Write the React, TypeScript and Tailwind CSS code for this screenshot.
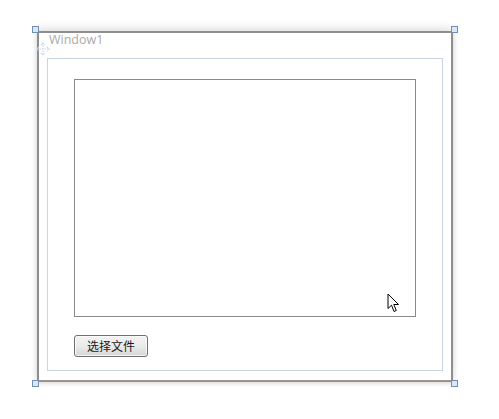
import React from 'react'

function Handle({ className }: { className: string }) {
  return (
    <div
      className={`absolute w-[7px] h-[7px] border border-[#6d8fb8] bg-[#dbe7f5] ${className}`}
    />
  )
}

function MoveIcon() {
  return (
    <svg
      width="14"
      height="14"
      viewBox="0 0 14 14"
      className="absolute left-[-3px] top-[9px]"
      aria-hidden
    >
      <g fill="none" stroke="#c6d6e9" strokeWidth="1.2" strokeDasharray="1.5 1">
        <path d="M7 1 L7 13 M1 7 L13 7" />
        <path d="M5 3 L7 1 L9 3 M5 11 L7 13 L9 11 M3 5 L1 7 L3 9 M11 5 L13 7 L11 9" />
      </g>
    </svg>
  )
}

function Cursor() {
  return (
    <svg
      width="13"
      height="20"
      viewBox="0 0 13 20"
      className="absolute left-[339px] top-[234px]"
      aria-hidden
    >
      <path
        d="M1 1 L1 15.5 L4.5 12.2 L7 18.5 L9.3 17.5 L6.8 11.5 L11.5 11.5 Z"
        fill="#ffffff"
        stroke="#000000"
        strokeWidth="1"
      />
    </svg>
  )
}

export default function App() {
  return (
    <div
      className="w-[499px] h-[419px] bg-white pt-[31px] pl-[37px]"
      style={{ fontFamily: '"Noto Sans CJK SC", "Liberation Sans", sans-serif' }}
    >
      <div className="relative w-[416px] h-[351px] border-2 border-[#8e8e8e] border-b-[#9a948c] shadow-[0_-3px_8px_rgba(0,0,0,0.12),0_2px_4px_rgba(0,0,0,0.1)] bg-white">
        <Handle className="left-[-7px] top-[-7px]" />
        <Handle className="right-[-7px] top-[-7px]" />
        <Handle className="left-[-7px] bottom-[-7px]" />
        <Handle className="right-[-7px] bottom-[-7px]" />
        <MoveIcon />

        <div className="flex flex-col h-full px-[8px] pb-[9px]">
          <div
            className="h-[25px] pl-[2px] text-[12.5px] leading-[14px] font-normal text-[#aaaaaa]"
            style={{ fontFamily: '"Open Sans", sans-serif' }}
          >
            Window1
          </div>

          <div className="relative flex-1 border border-[#c9d5e2] px-[26px] pt-[20px]">
            <div className="h-[238px] border border-[#8a8a8a] bg-white" />
            <div className="mt-[18px] flex">
              <button
                type="button"
                className="w-[74px] h-[22px] rounded-[3px] border border-[#707070] bg-gradient-to-b from-[#f3f3f3] via-[#ebebeb] to-[#d6d6d6] text-[12px] leading-[20px] text-[#1a1a1a] shadow-[inset_0_0_0_1px_rgba(255,255,255,0.7)]"
              >
                选择文件
              </button>
            </div>
            <Cursor />
          </div>
        </div>
      </div>
    </div>
  )
}
